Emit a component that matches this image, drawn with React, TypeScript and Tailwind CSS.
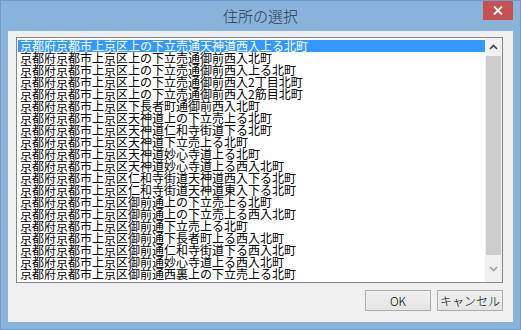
import React from "react";

const rows = [
  "京都府京都市上京区上の下立売通天神道西入上る北町",
  "京都府京都市上京区上の下立売通御前西入北町",
  "京都府京都市上京区上の下立売通御前西入上る北町",
  "京都府京都市上京区上の下立売通御前西入2丁目北町",
  "京都府京都市上京区上の下立売通御前西入2筋目北町",
  "京都府京都市上京区下長者町通御前西入北町",
  "京都府京都市上京区天神道上の下立売上る北町",
  "京都府京都市上京区天神道仁和寺街道下る北町",
  "京都府京都市上京区天神道下立売上る北町",
  "京都府京都市上京区天神道妙心寺道上る北町",
  "京都府京都市上京区天神道妙心寺道上る西入北町",
  "京都府京都市上京区仁和寺街道天神道西入下る北町",
  "京都府京都市上京区仁和寺街道天神道東入下る北町",
  "京都府京都市上京区御前通上の下立売上る北町",
  "京都府京都市上京区御前通上の下立売上る西入北町",
  "京都府京都市上京区御前通下立売上る北町",
  "京都府京都市上京区御前通下長者町上る西入北町",
  "京都府京都市上京区御前通仁和寺街道下る西入北町",
  "京都府京都市上京区御前通妙心寺道上る西入北町",
  "京都府京都市上京区御前通西裏上の下立売上る北町",
];

const jp = { fontFamily: '"Noto Sans CJK JP", "Noto Sans", sans-serif' };

export default function App() {
  return (
    <div
      className="w-[521px] h-[330px] bg-[#8ab3dc] border border-[#6e9bc8] flex flex-col overflow-hidden"
      style={jp}
    >
      <div className="relative h-[30px] shrink-0 flex items-center justify-center">
        <span className="text-[15px] leading-none font-light text-[#2b3a4a] mb-[1px]">住所の選択</span>
        <div className="absolute top-[-1px] right-[7px] w-[30px] h-[20px] bg-[#c75050] flex items-center justify-center">
          <svg width="10" height="9" viewBox="0 0 10 9">
            <path d="M1 0.5 L9 8.5 M9 0.5 L1 8.5" stroke="#fff" strokeWidth="1.8" />
          </svg>
        </div>
      </div>
      <div className="flex-1 mx-[7px] mb-[7px] bg-[#f0f0f0] flex flex-col pt-[6px] pl-[8px] pr-[10px]">
        <div className="h-[246px] border border-[#828790] bg-white flex">
          <div className="flex-1 pt-[2px] pl-[1px]">
            {rows.map((r, i) => (
              <div
                key={i}
                className={
                  "h-[12px] text-[12px] leading-[12px] whitespace-nowrap pl-[2px] " +
                  (i === 0 ? "bg-[#3399ff] text-white" : "text-black")
                }
              >
                {r}
              </div>
            ))}
          </div>
          <div className="w-[17px] bg-[#f0f0f0] flex flex-col items-center">
            <div className="h-[18px] w-full flex items-center justify-center">
              <svg width="9" height="6" viewBox="0 0 9 6">
                <path d="M1 5 L4.5 1.5 L8 5" stroke="#404040" strokeWidth="1.6" fill="none" />
              </svg>
            </div>
            <div className="w-[15px] h-[199px] bg-[#cdcdcd]" />
            <div className="flex-1 w-full flex items-center justify-center">
              <svg width="9" height="6" viewBox="0 0 9 6">
                <path d="M1 1 L4.5 4.5 L8 1" stroke="#a0a0a0" strokeWidth="1.6" fill="none" />
              </svg>
            </div>
          </div>
        </div>
        <div className="flex justify-end gap-[6px] mt-[7px]">
          <button className="w-[66px] h-[21px] border border-[#acacac] bg-gradient-to-b from-[#f0f0f0] to-[#e5e5e5] text-[12px] leading-none font-light text-black">
            OK
          </button>
          <button className="w-[66px] h-[21px] border border-[#acacac] bg-gradient-to-b from-[#f0f0f0] to-[#e5e5e5] text-[12px] leading-none font-light text-black">
            キャンセル
          </button>
        </div>
      </div>
    </div>
  );
}
